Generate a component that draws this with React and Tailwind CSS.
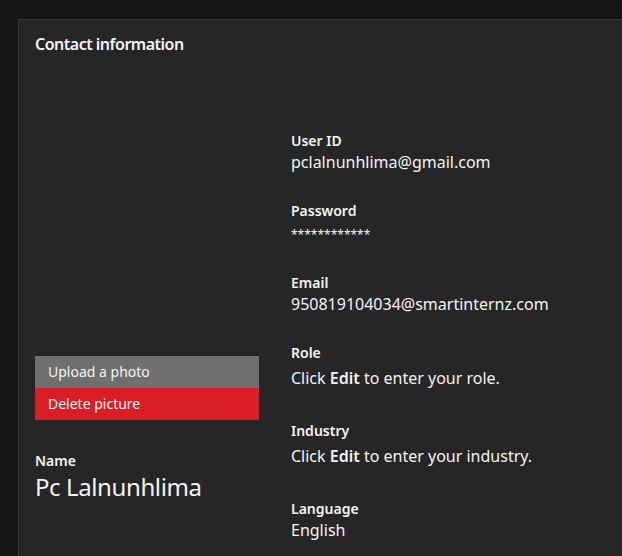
import React from "react";

const font = { fontFamily: '"Noto Sans", "Open Sans", sans-serif' };

function Field({ label, children, className = "", valueClass = "mt-[1px] text-base" }) {
  return (
    <div className={className}>
      <div className="text-sm font-semibold leading-[18px] text-[#f4f4f4]">{label}</div>
      <div className={`leading-[22px] text-[#f4f4f4] ${valueClass}`}>{children}</div>
    </div>
  );
}

export default function App() {
  return (
    <div className="min-h-screen bg-[#161616] pt-[19px] pl-[18px] overflow-hidden" style={font}>
      <div className="min-h-[537px] bg-[#262626] border-t border-l border-[#393939] px-4 pt-[13px]">
        <h2 className="text-base font-semibold leading-[22px] tracking-[-0.5px] text-[#f4f4f4]">
          Contact information
        </h2>

        <div className="flex gap-8">
          <div className="w-[224px] shrink-0 pt-[301px]">
            <button className="block w-full h-8 bg-[#6f6f6f] text-left px-[13px] text-sm text-[#f4f4f4]">
              Upload a photo
            </button>
            <button className="block w-full h-8 bg-[#da1e28] text-left px-[13px] text-sm text-[#f4f4f4]">
              Delete picture
            </button>
            <div className="mt-8">
              <div className="text-sm font-semibold leading-[18px] text-[#f4f4f4]">Name</div>
              <div className="text-2xl leading-[30px] mt-[2px] tracking-[-0.4px] text-[#f4f4f4]">
                Pc Lalnunhlima
              </div>
            </div>
          </div>

          <div className="pt-[77px]">
            <Field label="User ID" className="mb-[29px]">pclalnunhlima@gmail.com</Field>
            <Field label="Password" className="mb-[28px]" valueClass="mt-[4px] text-[12px]">
              ************
            </Field>
            <Field label="Email" className="mb-[29px]">950819104034@smartinternz.com</Field>
            <Field label="Role" className="mb-[33px]" valueClass="mt-[5px] text-base">
              Click <span className="font-semibold">Edit</span> to enter your role.
            </Field>
            <Field label="Industry" className="mb-[33px]" valueClass="mt-[5px] text-base">
              Click <span className="font-semibold">Edit</span> to enter your industry.
            </Field>
            <Field label="Language">English</Field>
          </div>
        </div>
      </div>
    </div>
  );
}
